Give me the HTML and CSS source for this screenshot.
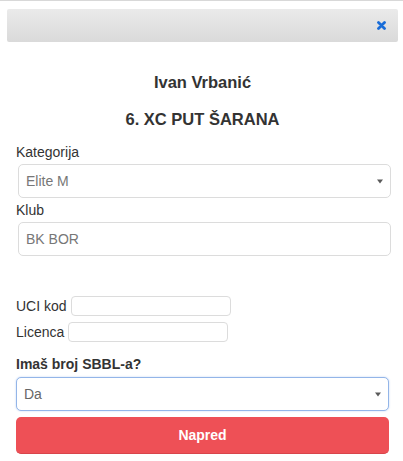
FILE: index.html
```html
<!DOCTYPE html>
<html lang="hr">
<head>
<meta charset="utf-8">
<title>Prijava</title>
<link rel="stylesheet" href="styles.css">
</head>
<body>
<div class="modal">
  <div class="modal-head">
    <span class="close" aria-label="Zatvori">
      <svg width="9" height="9" viewBox="0 0 9 9"><path d="M1.5 1.5L7.5 7.5M7.5 1.5L1.5 7.5" stroke="#1a6dd8" stroke-width="2.8" stroke-linecap="round" fill="none"/></svg>
    </span>
  </div>
  <div class="modal-body">
    <h2 class="rider">Ivan Vrbanić</h2>
    <h2 class="race">6. XC PUT ŠARANA</h2>

    <div class="lbl lbl-first">Kategorija</div>
    <div class="field select shifted">
      <span class="val">Elite M</span>
      <svg class="caret" width="6" height="5" viewBox="0 0 6 5"><path d="M0 0.5H6L3 4.5Z" fill="#5a5a5a"/></svg>
    </div>

    <div class="lbl lbl-klub">Klub</div>
    <div class="field shifted"><span class="val">BK BOR</span></div>

    <div class="row row-uci">
      <span class="row-lbl">UCI kod</span>
      <span class="small-input"></span>
    </div>
    <div class="row row-lic">
      <span class="row-lbl">Licenca</span>
      <span class="small-input"></span>
    </div>

    <div class="lbl lbl-bold">Imaš broj SBBL-a?</div>
    <div class="field select focused">
      <span class="val">Da</span>
      <svg class="caret" width="6" height="5" viewBox="0 0 6 5"><path d="M0 0.5H6L3 4.5Z" fill="#5a5a5a"/></svg>
    </div>

    <div class="btn">Napred</div>
  </div>
</div>
</body>
</html>
```

FILE: styles.css
```css
body {
  margin: 0;
  background: #fff;
  color: #333;
  font-family: "Liberation Sans", Arial, sans-serif;
}

.modal {
  border-top: 1px solid #d8d8d8;
}

.modal-head {
  margin: 8px 5px 0 7px;
  height: 33px;
  box-sizing: border-box;
  background: linear-gradient(#eaeaea, #dadada);
  border-radius: 2px;
  display: flex;
  align-items: center;
  justify-content: flex-end;
  padding-right: 12px;
}

.close {
  display: flex;
  width: 9px;
  height: 9px;
}

.modal-body {
  padding: 0 14px 0 16px;
}

.rider,
.race {
  margin: 0;
  text-align: center;
  font-weight: bold;
  font-size: 16.5px;
  line-height: 20px;
  color: #333;
}

.rider {
  margin-top: 30px;
}

.race {
  margin-top: 17px;
}

.lbl {
  font-size: 14px;
  line-height: 20px;
  color: #333;
}

.lbl-first {
  margin-top: 13px;
  margin-bottom: 2px;
}

.lbl-klub {
  margin-top: 2px;
  margin-bottom: 2px;
}

.lbl-bold {
  margin-top: 12px;
  margin-bottom: 3px;
  font-weight: bold;
}

.field {
  height: 34px;
  box-sizing: border-box;
  border: 1px solid #dcdcdc;
  border-radius: 5px;
  background: #fff;
  display: flex;
  align-items: center;
  padding: 0 7px 0 7px;
  font-size: 14px;
  color: #777;
}

.shifted {
  margin-left: 2px;
  margin-right: -2px;
}

.select {
  justify-content: space-between;
}

.focused {
  border-color: #93b5e8;
  box-shadow: 0 0 2px rgba(102, 150, 230, 0.45);
  color: #666;
}

.caret {
  display: block;
}

.row {
  display: flex;
  align-items: center;
  gap: 4px;
  height: 20px;
  font-size: 14px;
  color: #333;
}

.row-uci {
  margin-top: 40px;
}

.row-lic {
  margin-top: 6px;
}

.small-input {
  width: 160px;
  height: 20px;
  box-sizing: border-box;
  border: 1px solid #dcdcdc;
  border-radius: 4px;
  background: #fff;
}

.btn {
  margin-top: 6px;
  height: 37px;
  box-sizing: border-box;
  background: #ee5056;
  border-bottom: 1px solid #d8454b;
  border-radius: 5px;
  color: #fff;
  font-weight: bold;
  font-size: 14px;
  display: flex;
  align-items: center;
  justify-content: center;
}
```
